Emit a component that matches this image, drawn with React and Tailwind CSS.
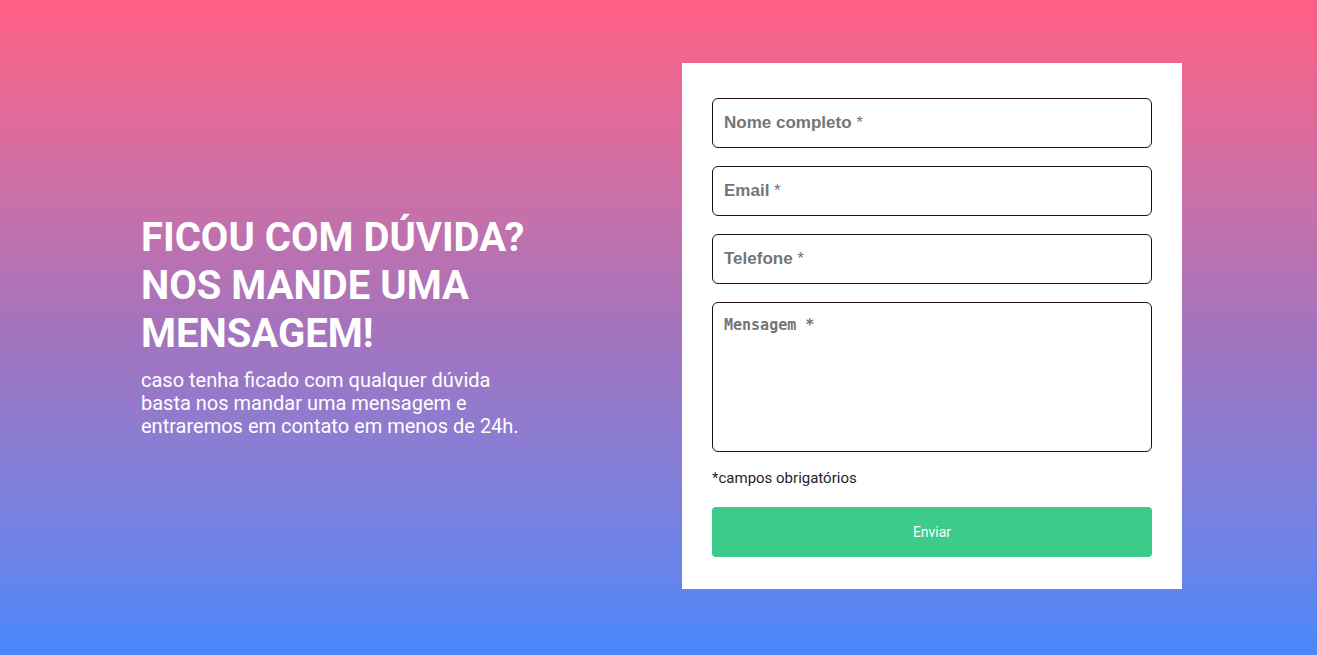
import React from 'react';

const FIELDS = [
  { id: 'nome', type: 'text', label: 'Nome completo' },
  { id: 'email', type: 'email', label: 'Email' },
  { id: 'telefone', type: 'tel', label: 'Telefone' },
];

function Field({ id, type, label }) {
  const [value, setValue] = React.useState('');
  return (
    <label htmlFor={id} className="relative block">
      <input
        id={id}
        type={type}
        value={value}
        onChange={(e) => setValue(e.target.value)}
        className="h-[50px] w-full rounded-[6px] border border-[#220a22] px-[12px] text-[17px] font-bold text-[#333] outline-none"
        style={{ fontFamily: '"Liberation Sans", Arial, sans-serif' }}
      />
      {!value && (
        <span
          className="pointer-events-none absolute left-[12px] top-1/2 -translate-y-1/2 text-[17px] text-[#757575]"
          style={{ fontFamily: '"Liberation Sans", Arial, sans-serif' }}
        >
          <span className="font-bold">{label}</span> *
        </span>
      )}
    </label>
  );
}

export default function App() {
  return (
    <div
      className="h-screen w-full flex items-center pb-[3px] bg-gradient-to-b from-[#ff5f83] via-[#a573bd] to-[#4688fa]"
      style={{ fontFamily: 'Roboto, "Liberation Sans", sans-serif' }}
    >
      <div className="ml-[141px] flex items-center w-[1041px] justify-between">
        {/* texto de chamada */}
        <div className="w-[400px] text-white">
          <h1 className="text-[40px] leading-[48px] font-bold uppercase">
            Ficou com dúvida?
            <br />
            Nos mande uma mensagem!
          </h1>
          <p className="mt-[11px] text-[20px] leading-[23px] w-[390px]">
            caso tenha ficado com qualquer dúvida basta nos mandar uma
            mensagem e entraremos em contato em menos de 24h.
          </p>
        </div>

        {/* formulário */}
        <form
          className="w-[500px] bg-white px-[30px] pt-[35px] pb-[32px] flex flex-col"
          onSubmit={(e) => e.preventDefault()}
        >
          <div className="flex flex-col gap-[18px]">
            {FIELDS.map((f) => (
              <Field key={f.id} {...f} />
            ))}
            <textarea
              placeholder="Mensagem *"
              className="h-[150px] w-full resize-none rounded-[6px] border border-[#220a22] px-[11px] py-[12px] text-[15px] leading-[20px] font-bold text-[#333] placeholder:text-[#757575] outline-none"
              style={{ fontFamily: '"DejaVu Sans Mono", monospace' }}
            />
          </div>
          <p className="mt-[17px] text-[15px] leading-[18px] text-[#1f1f1f]">
            *campos obrigatórios
          </p>
          <button
            type="submit"
            className="mt-[20px] h-[50px] w-full rounded-[4px] bg-[#3ccb88] text-white text-[14px]"
          >
            Enviar
          </button>
        </form>
      </div>
    </div>
  );
}
